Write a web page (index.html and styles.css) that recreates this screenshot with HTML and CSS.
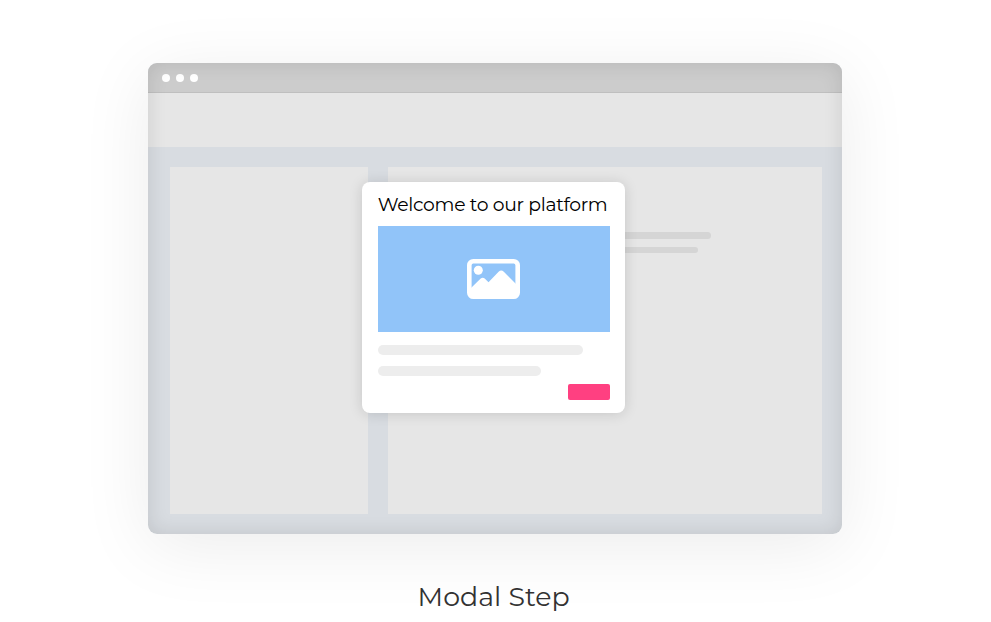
FILE: index.html
```html
<!DOCTYPE html>
<html lang="en">
<head>
    <meta charset="UTF-8">
    <title>Modal Step</title>
    <link rel="stylesheet" href="styles.css">
</head>
<body>

<div class="main">
    <div class="window">
        <div class="titlebar">
            <span class="dot"></span>
            <span class="dot"></span>
            <span class="dot"></span>
        </div>
        <div class="header"></div>
        <div class="content">
            <div class="sidebar"></div>
            <div class="page">
                <div class="line line1"></div>
                <div class="line line2"></div>
            </div>
        </div>

        <!-- modal -->
        <div class="modal">
            <div class="title">Welcome to our platform</div>
            <div class="picture">
                <svg width="53" height="40" viewBox="0 0 53 40">
                    <rect x="2.3" y="2.3" width="48.4" height="35.4" rx="4" fill="none" stroke="#fff" stroke-width="4.6"/>
                    <circle cx="11.3" cy="11.3" r="4.5" fill="#fff"/>
                    <path d="M4 29 L13.7 19.5 Q15.7 17.8 17.7 19.5 L21.5 23.2 L31.6 12.8 Q34.2 10 36.8 12.8 L49 25 V37 H4 Z" fill="#fff"/>
                </svg>
            </div>
            <div class="text text1"></div>
            <div class="text text2"></div>
            <div class="button"></div>
        </div>
    </div>
    <div class="caption"><span>Modal Step</span></div>
</div>

</body>
</html>
```

FILE: styles.css
```css
*{
    margin: 0;
    padding: 0;
    box-sizing: border-box;
}
body{
    background-color: #ffffff;
    font-family: Montserrat, Inter, "Liberation Sans", sans-serif;
}
.main{
    width: 991px;
    height: 622px;
    padding-top: 63px;
    overflow: hidden;
}
.window{
    position: relative;
    width: 693.4px;
    height: 471px;
    margin-left: 148.3px;
    border-radius: 9px;
    background-color: #d8dce1;
    box-shadow: 0 12px 70px rgba(0,0,0,0.08);
    display: flex;
    flex-direction: column;
    overflow: hidden;
}
/* soft dark edge inside the window */
.window:after{
    content: "";
    position: absolute;
    top: 0;
    left: 0;
    width: 100%;
    height: 100%;
    border-radius: 9px;
    box-shadow: inset 0 0 20px rgba(0,0,0,0.11);
}
.titlebar{
    height: 30px;
    background-color: #cccccc;
    border-bottom: 1px solid #bfbfbf;
    padding-left: 13.7px;
    display: flex;
    align-items: center;
    gap: 5.8px;
}
.dot{
    width: 8px;
    height: 8px;
    border-radius: 50%;
    background-color: #ffffff;
}
.header{
    height: 54px;
    background-color: #e6e6e6;
}
.content{
    flex: 1;
    display: flex;
    gap: 20px;
    padding: 20px 19.7px 20px 21.7px;
}
.sidebar{
    width: 198px;
    background-color: #e6e6e6;
}
.page{
    flex: 1;
    background-color: #e6e6e6;
    padding: 65px 0 0 21px;
}
.line{
    height: 6.5px;
    border-radius: 4px;
    background-color: #d5d5d5;
}
.line1{
    width: 302px;
}
.line2{
    width: 289px;
    margin-top: 8px;
}
.modal{
    position: absolute;
    z-index: 1;
    left: 213.7px;
    top: 118.6px;
    width: 263.4px;
    height: 231.7px;
    padding: 13.4px 15.4px 0 15.8px;
    border-radius: 8px;
    background-color: #ffffff;
    box-shadow: 0 1px 14px rgba(0,0,0,0.14);
    display: flex;
    flex-direction: column;
}
.title{
    height: 20px;
    line-height: 20px;
    font-size: 18.8px;
    letter-spacing: -0.33px;
    color: #000000;
    white-space: nowrap;
}
.picture{
    height: 106px;
    margin-top: 11px;
    background-color: #91c4f9;
    display: flex;
    align-items: center;
    justify-content: center;
}
.text{
    height: 10.5px;
    border-radius: 6px;
    background-color: #ededed;
}
.text1{
    width: 205.5px;
    margin-top: 13px;
}
.text2{
    width: 163.5px;
    margin-top: 10.5px;
}
.button{
    align-self: flex-end;
    width: 42.4px;
    height: 16px;
    margin-top: 8px;
    border-radius: 2px;
    background-color: #ff4081;
}
.caption{
    margin-top: 44.5px;
    padding-left: 417.5px;
    line-height: 36px;
    font-size: 26.8px;
    letter-spacing: 0.05px;
    color: #333333;
    white-space: nowrap;
}
```
